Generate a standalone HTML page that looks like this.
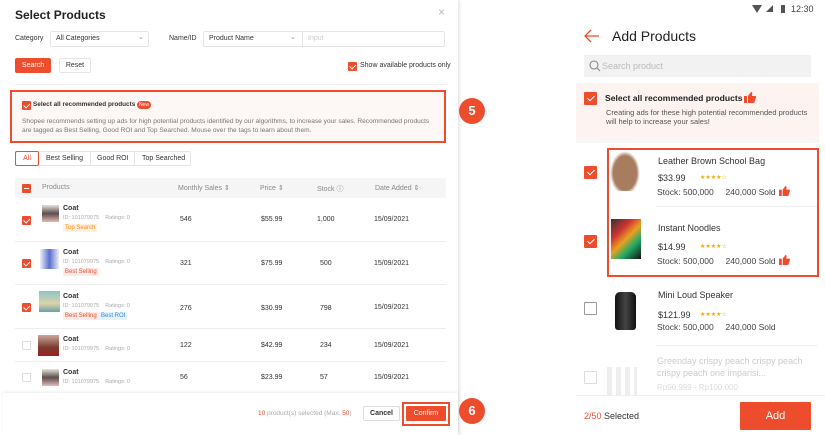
<!DOCTYPE html>
<html><head><meta charset="utf-8"><style>
*{margin:0;padding:0;box-sizing:border-box}
body{width:825px;height:435px;background:#fff;font-family:"Liberation Sans",Arial,sans-serif;position:relative;overflow:hidden;color:#333}
.a{position:absolute;white-space:nowrap}
.cb{position:absolute;width:9px;height:9px;background:#ee4d2d;border-radius:1px}
.cb:after{content:"";position:absolute;left:2.5px;top:1px;width:2.5px;height:4.5px;border:solid #fff;border-width:0 1.2px 1.2px 0;transform:rotate(45deg)}
.cbe{position:absolute;width:9px;height:9px;border:1px solid #ddd;border-radius:1px;background:#fff}
.box{position:absolute;border:1px solid #e5e5e5;border-radius:2px;background:#fff}
.s{font-size:7px;color:#333}
.g{color:#aaa}
.tag{position:absolute;font-size:6px;padding:1px 2px;border-radius:1px}
.row{position:absolute;left:15px;width:431px;border-bottom:1px solid #eee}
.circ{position:absolute;width:26px;height:26px;border-radius:50%;background:#ee4d2d;color:#fff;font-weight:bold;font-size:13px;text-align:center;line-height:26px}
.mcb{position:absolute;width:13px;height:13px;background:#ee4d2d;border-radius:1px}
.mcb:after{content:"";position:absolute;left:4.5px;top:2px;width:3px;height:6px;border:solid #fff;border-width:0 1.4px 1.4px 0;transform:rotate(45deg)}
.mcbe{position:absolute;width:13px;height:13px;border:1.3px solid #999;border-radius:1px}
.m{font-size:9px;color:#333}
.st{color:#f6a700;font-size:6px;letter-spacing:0}
.thumb{position:absolute;width:11px;height:10px}
</style></head><body>
<div class="a" style="left:0;top:0;width:458px;height:435px;box-shadow:1px 0 4px rgba(0,0,0,.15);background:#fff"></div>
<div class="a" style="left:15px;top:8px;font-size:12px;font-weight:bold;color:#222">Select Products</div>
<div class="a" style="left:438px;top:5px;font-size:12px;color:#bbb">×</div>
<div class="a s" style="left:15px;top:35px">Category</div>
<div class="box" style="left:50px;top:31px;width:99px;height:16px"></div>
<div class="a s" style="left:56px;top:35px">All Categories</div>
<div class="a" style="left:138px;top:33px;font-size:7px;color:#999">⌄</div>
<div class="a s" style="left:169px;top:35px">Name/ID</div>
<div class="box" style="left:203px;top:31px;width:242px;height:16px"></div>
<div class="a" style="left:302px;top:31px;width:1px;height:16px;background:#e5e5e5"></div>
<div class="a s" style="left:209px;top:35px">Product Name</div>
<div class="a" style="left:290px;top:33px;font-size:7px;color:#999">⌄</div>
<div class="a s g" style="left:308px;top:35px;color:#ccc">Input</div>
<div class="a" style="left:15px;top:58px;width:36px;height:15px;background:#ee4d2d;border-radius:2px;color:#fff;font-size:7px;text-align:center;line-height:15px">Search</div>
<div class="box" style="left:59px;top:58px;width:32px;height:15px;font-size:7px;text-align:center;line-height:13px">Reset</div>
<div class="cb" style="left:348px;top:62px"></div>
<div class="a s" style="left:360px;top:62px">Show available products only</div>
<div class="a" style="left:15px;top:84px;width:431px;height:1px;background:#eee"></div>
<div class="a" style="left:10px;top:90px;width:436px;height:53px;border:2px solid #ee4d2d;background:#fdf7f5"></div>
<div class="cb" style="left:22px;top:101px"></div>
<div class="a" style="left:33px;top:101px;font-size:6.4px;font-weight:bold;color:#333">Select all recommended products</div>
<div class="a" style="left:137px;top:101px;background:#ee4d2d;color:#fff;font-size:5px;padding:1px 2px;border-radius:4px">New</div>
<div class="a" style="left:22px;top:117px;font-size:6.6px;color:#777;line-height:9px">Shopee recommends setting up ads for high potential products identified by our algorithms, to increase your sales. Recommended products<br>are tagged as Best Selling, Good ROI and Top Searched. Mouse over the tags to learn about them.</div>
<div class="box" style="left:15px;top:151px;width:176px;height:15px"></div>
<div class="a" style="left:15px;top:151px;width:24px;height:15px;border:1px solid #ee4d2d;border-radius:2px;color:#ee4d2d;font-size:7px;text-align:center;line-height:13px">All</div>
<div class="a s" style="left:46px;top:155px">Best Selling</div>
<div class="a" style="left:90px;top:151px;width:1px;height:15px;background:#e5e5e5"></div>
<div class="a s" style="left:97px;top:155px">Good ROI</div>
<div class="a" style="left:134px;top:151px;width:1px;height:15px;background:#e5e5e5"></div>
<div class="a s" style="left:142px;top:155px">Top Searched</div>
<div class="a" style="left:15px;top:178px;width:431px;height:20px;background:#f5f5f5"></div>
<div class="a" style="left:22px;top:184px;width:9px;height:9px;background:#ee4d2d;border-radius:1px"><div style="position:absolute;left:2px;top:4px;width:5px;height:1.2px;background:#fff"></div></div>
<div class="a s g" style="left:42px;top:184px;color:#888">Products</div>
<div class="a s" style="left:178px;top:184px;color:#888">Monthly Sales ⇕</div>
<div class="a s" style="left:260px;top:184px;color:#888">Price ⇕</div>
<div class="a s" style="left:317px;top:184px;color:#888">Stock ⓘ</div>
<div class="a s" style="left:375px;top:184px;color:#888">Date Added ⇕</div>

<div class="row" style="top:198px;height:44px"></div>
<div class="row" style="top:242px;height:43px"></div>
<div class="row" style="top:285px;height:44px"></div>
<div class="row" style="top:329px;height:33px"></div>

<div class="cb" style="left:22px;top:216px"></div>
<div class="a" style="left:42px;top:205px;width:17px;height:17px;background:linear-gradient(#e9e3dc,#5a4e4e 50%,#e8b9b5)"></div>
<div class="a" style="left:63px;top:205px;font-size:7px;font-weight:bold">Coat</div>
<div class="a" style="left:63px;top:215px;font-size:5.5px;color:#aaa">ID: 101079975 &nbsp;&nbsp;&nbsp;Ratings: 0</div>
<div class="tag" style="left:63px;top:224px;background:#fff1e6;color:#ff8a00">Top Search</div>
<div class="a s" style="left:180px;top:216px">546</div><div class="a s" style="left:261px;top:216px">$55.99</div><div class="a s" style="left:317px;top:216px">1,000</div><div class="a s" style="left:374px;top:216px">15/09/2021</div>

<div class="cb" style="left:22px;top:259px"></div>
<div class="a" style="left:40px;top:249px;width:19px;height:20px;background:linear-gradient(90deg,#eef0f6,#5a6fd0,#eef0f6)"></div>
<div class="a" style="left:63px;top:249px;font-size:7px;font-weight:bold">Coat</div>
<div class="a" style="left:63px;top:259px;font-size:5.5px;color:#aaa">ID: 101079975 &nbsp;&nbsp;&nbsp;Ratings: 0</div>
<div class="tag" style="left:63px;top:268px;background:#fdecea;color:#ee4d2d">Best Selling</div>
<div class="a s" style="left:180px;top:260px">321</div><div class="a s" style="left:261px;top:260px">$75.99</div><div class="a s" style="left:320px;top:260px">500</div><div class="a s" style="left:374px;top:260px">15/09/2021</div>

<div class="cb" style="left:22px;top:303px"></div>
<div class="a" style="left:39px;top:291px;width:21px;height:21px;background:linear-gradient(#8ec3c9,#dcd2a8 60%,#6aa0a8)"></div>
<div class="a" style="left:63px;top:293px;font-size:7px;font-weight:bold">Coat</div>
<div class="a" style="left:63px;top:303px;font-size:5.5px;color:#aaa">ID: 101079975 &nbsp;&nbsp;&nbsp;Ratings: 0</div>
<div class="tag" style="left:63px;top:312px;background:#fdecea;color:#ee4d2d">Best Selling</div>
<div class="tag" style="left:99px;top:312px;background:#e6f3fc;color:#2f8ae0">Best ROI</div>
<div class="a s" style="left:180px;top:305px">276</div><div class="a s" style="left:261px;top:305px">$30.99</div><div class="a s" style="left:320px;top:305px">798</div><div class="a s" style="left:374px;top:304px">15/09/2021</div>

<div class="cbe" style="left:22px;top:341px"></div>
<div class="a" style="left:38px;top:335px;width:21px;height:21px;background:linear-gradient(#c9a89b,#7a3a30 60%,#a02020)"></div>
<div class="a" style="left:63px;top:336px;font-size:7px;font-weight:bold">Coat</div>
<div class="a" style="left:63px;top:346px;font-size:5.5px;color:#aaa">ID: 101079975 &nbsp;&nbsp;&nbsp;Ratings: 0</div>
<div class="a s" style="left:180px;top:342px">122</div><div class="a s" style="left:261px;top:342px">$42.99</div><div class="a s" style="left:320px;top:342px">234</div><div class="a s" style="left:374px;top:342px">15/09/2021</div>

<div class="cbe" style="left:22px;top:373px"></div>
<div class="a" style="left:42px;top:369px;width:17px;height:17px;background:linear-gradient(#e9e3dc,#5a4e4e 50%,#e8b9b5)"></div>
<div class="a" style="left:63px;top:369px;font-size:7px;font-weight:bold">Coat</div>
<div class="a" style="left:63px;top:379px;font-size:5.5px;color:#aaa">ID: 101079975 &nbsp;&nbsp;&nbsp;Ratings: 0</div>
<div class="a s" style="left:180px;top:374px">56</div><div class="a s" style="left:261px;top:374px">$23.99</div><div class="a s" style="left:320px;top:374px">57</div><div class="a s" style="left:374px;top:374px">15/09/2021</div>

<div class="a" style="left:3px;top:393px;width:455px;height:42px;background:#fff;box-shadow:0 -1px 3px rgba(0,0,0,.08)"></div>
<div class="a" style="left:258px;top:410px;font-size:6.5px;color:#aaa"><span style="color:#ee4d2d">10</span> product(s) selected (Max. <span style="color:#ee4d2d">50</span>)</div>
<div class="box" style="left:363px;top:406px;width:37px;height:15px;font-size:7px;text-align:center;line-height:13px;font-weight:bold;border-color:#ddd">Cancel</div>
<div class="a" style="left:402px;top:402px;width:48px;height:24px;border:2px solid #ee4d2d"></div>
<div class="a" style="left:406px;top:406px;width:40px;height:15px;background:#ee4d2d;color:#fff;font-size:7px;text-align:center;line-height:15px;border-radius:1px">Confirm</div>

<div class="circ" style="left:459px;top:98px">5</div>
<div class="circ" style="left:459px;top:398px">6</div>

<div class="a" style="left:752px;top:5px;width:0;height:0;border-left:5px solid transparent;border-right:5px solid transparent;border-top:8px solid #555"></div>
<div class="a" style="left:766px;top:5px;width:0;height:0;border-left:7px solid transparent;border-bottom:7px solid #555"></div>
<div class="a" style="left:781px;top:5px;width:4px;height:8px;background:#555"></div>
<div class="a" style="left:791px;top:4px;font-size:9px;color:#444">12:30</div>
<svg class="a" style="left:584px;top:29px" width="16" height="14" viewBox="0 0 16 14"><path d="M15 7H2M7 1L1 7l6 6" fill="none" stroke="#ee4d2d" stroke-width="1.3"/></svg>
<div class="a" style="left:612px;top:28px;font-size:14px;color:#222">Add Products</div>
<div class="a" style="left:584px;top:55px;width:227px;height:22px;background:#f2f2f2"></div>
<svg class="a" style="left:589px;top:60px" width="12" height="12" viewBox="0 0 12 12"><circle cx="5" cy="5" r="4" fill="none" stroke="#888" stroke-width="1.1"/><path d="M8 8l3 3" stroke="#888" stroke-width="1.1"/></svg>
<div class="a" style="left:602px;top:61px;font-size:9px;color:#bbb">Search product</div>
<div class="a" style="left:576px;top:83px;width:243px;height:54px;background:#fdf3f1"></div>
<div class="a" style="left:576px;top:137px;width:243px;height:6px;background:#f7f7f7"></div>
<div class="mcb" style="left:584px;top:92px"></div>
<div class="a" style="left:605px;top:93px;font-size:8.6px;font-weight:bold;color:#222">Select all recommended products</div>
<svg class="thumb" style="left:744px;top:92px;width:12px;height:11px" viewBox="0 0 12 11"><rect x="0" y="4" width="3" height="7" fill="#ee4d2d"/><path d="M4 4L7 0c1.2 0 1.5 1 1.2 2L8 4h3.2c.6 0 1 .6.8 1.2L10.5 10c-.2.6-.6 1-1.2 1H4z" fill="#ee4d2d"/></svg>
<div class="a" style="left:606px;top:108px;font-size:7.5px;color:#555;line-height:9px">Creating ads for these high potential recommended products<br>will help to increase your sales!</div>

<div class="a" style="left:607px;top:148px;width:212px;height:129px;border:2px solid #ee4d2d"></div>
<div class="mcb" style="left:584px;top:166px"></div>
<div class="a" style="left:610px;top:151px;width:30px;height:40px;background:radial-gradient(ellipse at 50% 55%,#a87c5e 55%,#fff 70%)"></div>
<div class="a m" style="left:658px;top:156px">Leather Brown School Bag</div>
<div class="a m" style="left:658px;top:173px">$33.99</div>
<div class="a st" style="left:700px;top:174px">★★★★☆</div>
<div class="a" style="left:657px;top:187px;font-size:8.5px;color:#444">Stock: 500,000 &nbsp;&nbsp;&nbsp;&nbsp;240,000 Sold</div>
<svg class="thumb" style="left:779px;top:186px" viewBox="0 0 12 11"><rect x="0" y="4" width="3" height="7" fill="#ee4d2d"/><path d="M4 4L7 0c1.2 0 1.5 1 1.2 2L8 4h3.2c.6 0 1 .6.8 1.2L10.5 10c-.2.6-.6 1-1.2 1H4z" fill="#ee4d2d"/></svg>
<div class="a" style="left:656px;top:206px;width:161px;height:1px;background:#eee"></div>

<div class="mcb" style="left:584px;top:235px"></div>
<div class="a" style="left:611px;top:219px;width:30px;height:40px;background:linear-gradient(135deg,#333,#c33 30%,#e9a020 50%,#2a6 70%,#111)"></div>
<div class="a m" style="left:658px;top:223px">Instant Noodles</div>
<div class="a m" style="left:658px;top:242px">$14.99</div>
<div class="a st" style="left:700px;top:243px">★★★★☆</div>
<div class="a" style="left:657px;top:256px;font-size:8.5px;color:#444">Stock: 500,000 &nbsp;&nbsp;&nbsp;&nbsp;240,000 Sold</div>
<svg class="thumb" style="left:779px;top:255px" viewBox="0 0 12 11"><rect x="0" y="4" width="3" height="7" fill="#ee4d2d"/><path d="M4 4L7 0c1.2 0 1.5 1 1.2 2L8 4h3.2c.6 0 1 .6.8 1.2L10.5 10c-.2.6-.6 1-1.2 1H4z" fill="#ee4d2d"/></svg>

<div class="mcbe" style="left:584px;top:302px"></div>
<div class="a" style="left:615px;top:292px;width:21px;height:38px;background:linear-gradient(90deg,#111,#444,#111);border-radius:5px 5px 3px 3px"></div>
<div class="a m" style="left:658px;top:290px">Mini Loud Speaker</div>
<div class="a m" style="left:658px;top:310px">$121.99</div>
<div class="a st" style="left:700px;top:311px">★★★★☆</div>
<div class="a" style="left:657px;top:322px;font-size:8.5px;color:#444">Stock: 500,000 &nbsp;&nbsp;&nbsp;&nbsp;240,000 Sold</div>
<div class="a" style="left:656px;top:345px;width:161px;height:1px;background:#eee"></div>

<div class="a" style="left:584px;top:371px;width:13px;height:13px;border:1.3px solid #ddd;border-radius:1px"></div>
<div class="a" style="left:607px;top:367px;width:30px;height:28px;background:repeating-linear-gradient(90deg,#eee 0 5px,#fff 5px 9px)"></div>
<div class="a" style="left:657px;top:355px;font-size:9px;color:#ccc;line-height:12px">Greenday crispy peach crispy peach<br>crispy peach one imparisi...</div>
<div class="a" style="left:657px;top:383px;font-size:8px;color:#ddd">Rp90.999 - Rp100.000</div>

<div class="a" style="left:576px;top:395px;width:249px;height:40px;background:#fff;border-top:1px solid #f0f0f0"></div>
<div class="a" style="left:584px;top:411px;font-size:9px;color:#333"><span style="color:#ee4d2d">2/50</span> Selected</div>
<div class="a" style="left:740px;top:402px;width:71px;height:28px;background:#ee4d2d;color:#fff;font-size:11px;text-align:center;line-height:28px;border-radius:1px">Add</div>
</body></html>
